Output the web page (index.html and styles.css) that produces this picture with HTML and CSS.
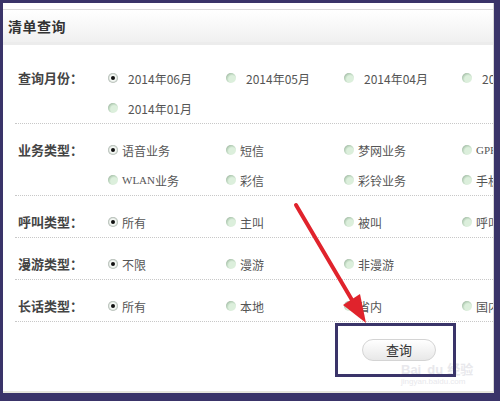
FILE: index.html
```html
<!DOCTYPE html>
<html lang="zh-CN">
<head>
<meta charset="utf-8">
<title>清单查询</title>
<link rel="stylesheet" href="styles.css">
</head>
<body>
<div class="panel">
  <div class="header"><span class="title">清单查询</span></div>
  <div class="form">
    <div class="row">
      <div class="label">查询月份：</div>
      <div class="opts wide">
        <span class="opt"><i class="radio on"></i>2014年06月</span>
        <span class="opt"><i class="radio"></i>2014年05月</span>
        <span class="opt"><i class="radio"></i>2014年04月</span>
        <span class="opt"><i class="radio"></i>2014年03月</span>
        <span class="opt"><i class="radio"></i>2014年02月</span>
        <span class="opt"><i class="radio"></i>2014年01月</span>
      </div>
    </div>
    <div class="row">
      <div class="label">业务类型：</div>
      <div class="opts">
        <span class="opt"><i class="radio on"></i>语音业务</span>
        <span class="opt"><i class="radio"></i>短信</span>
        <span class="opt"><i class="radio"></i>梦网业务</span>
        <span class="opt"><i class="radio"></i><span class="serif">GPRS</span>业务</span>
        <span class="opt"><i class="radio"></i>其他</span>
        <span class="opt"><i class="radio"></i><span class="serif">WLAN</span>业务</span>
        <span class="opt"><i class="radio"></i>彩信</span>
        <span class="opt"><i class="radio"></i>彩铃业务</span>
        <span class="opt"><i class="radio"></i>手机报</span>
      </div>
    </div>
    <div class="row">
      <div class="label">呼叫类型：</div>
      <div class="opts">
        <span class="opt"><i class="radio on"></i>所有</span>
        <span class="opt"><i class="radio"></i>主叫</span>
        <span class="opt"><i class="radio"></i>被叫</span>
        <span class="opt"><i class="radio"></i>呼叫转移</span>
      </div>
    </div>
    <div class="row">
      <div class="label">漫游类型：</div>
      <div class="opts">
        <span class="opt"><i class="radio on"></i>不限</span>
        <span class="opt"><i class="radio"></i>漫游</span>
        <span class="opt"><i class="radio"></i>非漫游</span>
      </div>
    </div>
    <div class="row">
      <div class="label">长话类型：</div>
      <div class="opts">
        <span class="opt"><i class="radio on"></i>所有</span>
        <span class="opt"><i class="radio"></i>本地</span>
        <span class="opt"><i class="radio"></i>省内</span>
        <span class="opt"><i class="radio"></i>国内长途</span>
      </div>
    </div>
    <div class="actions">
      <button class="btn" type="button">查询</button>
    </div>
  </div>
  <div class="watermark"><span class="wm-big">Bai<span class="wm-paw">du</span>经验</span><span class="wm-small">jingyan.baidu.com</span></div>
</div>
<div class="highlight"></div>
<svg class="arrow" width="500" height="401" viewBox="0 0 500 401">
  <line x1="296" y1="205" x2="352" y2="300" stroke="#e0232c" stroke-width="4" stroke-linecap="round"/>
  <polygon points="366,323 343,305 360,294" fill="#e0232c"/>
</svg>
</body>
</html>
```

FILE: styles.css
```css
html, body {
  margin: 0;
  padding: 0;
}
body {
  width: 500px;
  height: 401px;
  background: #3a3469;
  position: relative;
  overflow: hidden;
  font-family: "Noto Sans CJK SC", "Noto Sans", sans-serif;
}
.panel {
  position: relative;
  margin: 3px 6px 0 3px;
  width: 491px;
  height: 390px;
  background: #fff;
  border-bottom: 2px solid #e6e6dc;
  border-right: 1px solid #d8d8d8;
  box-sizing: border-box;
  padding-top: 6px;
  overflow: hidden;
}
.header {
  height: 32px;
  border-top: 1px solid #dcdcdc;
  border-bottom: 3px solid #ececec;
  background: linear-gradient(#ffffff, #f0f0f0);
  display: flex;
  align-items: center;
  padding-left: 5px;
}
.title {
  font-size: 14px;
  font-weight: bold;
  color: #333;
  letter-spacing: 0.5px;
}
.form {
  margin-top: 7px;
  margin-left: 12px;
}
.row {
  display: flex;
  padding: 11px 0 0 3px;
  border-bottom: 1px dotted #c8c8c8;
}
.label {
  width: 90px;
  flex: none;
  line-height: 30px;
  font-size: 13px;
  font-weight: bold;
  color: #444;
}
.opts {
  display: grid;
  grid-template-columns: repeat(5, 118px);
  grid-auto-rows: 30px;
  flex: none;
}
.opt {
  display: flex;
  align-items: center;
  height: 30px;
  font-size: 12px;
  color: #555;
  white-space: nowrap;
}
.serif {
  font-family: "Liberation Serif", serif;
  font-size: 11px;
}
.radio {
  width: 10px;
  height: 10px;
  border-radius: 50%;
  margin-right: 4px;
  flex: none;
  background: radial-gradient(circle at 62% 62%, #dcefdc 0 40%, #b5cfb7 65%, #6f7a72 100%);
  position: relative;
}
.wide .radio {
  margin-right: 10px;
}
.radio.on {
  background: radial-gradient(circle at 50% 50%, #f4f8f4 0 45%, #a9b3ab 70%, #5f6862 100%);
}
.radio.on::after {
  content: "";
  position: absolute;
  left: 3px;
  top: 3px;
  width: 4px;
  height: 4px;
  border-radius: 50%;
  background: #111;
}
.actions {
  display: flex;
  padding-left: 347px;
  padding-top: 17px;
}
.btn {
  width: 74px;
  height: 22px;
  border: 1px solid #d4d4d4;
  border-radius: 11px;
  background: linear-gradient(#ffffff, #e8e8e8);
  font-family: "Noto Sans CJK SC", sans-serif;
  font-size: 13px;
  color: #333;
  padding: 0;
  line-height: 20px;
}
.watermark {
  position: absolute;
  left: 398px;
  top: 360px;
  display: flex;
  flex-direction: column;
  color: #e8e8ec;
  pointer-events: none;
}
.wm-big {
  font-size: 13px;
  font-weight: bold;
  line-height: 14px;
  font-family: "Liberation Sans", "Noto Sans CJK SC", sans-serif;
}
.wm-paw {
  margin-left: 6px;
  margin-right: 4px;
}
.wm-small {
  font-size: 8px;
  line-height: 10px;
  font-family: "Liberation Sans", sans-serif;
}
.highlight {
  position: absolute;
  left: 335px;
  top: 323px;
  width: 115px;
  height: 48px;
  border: 3px solid #3a3469;
}
.arrow {
  position: absolute;
  left: 0;
  top: 0;
  pointer-events: none;
}
```
